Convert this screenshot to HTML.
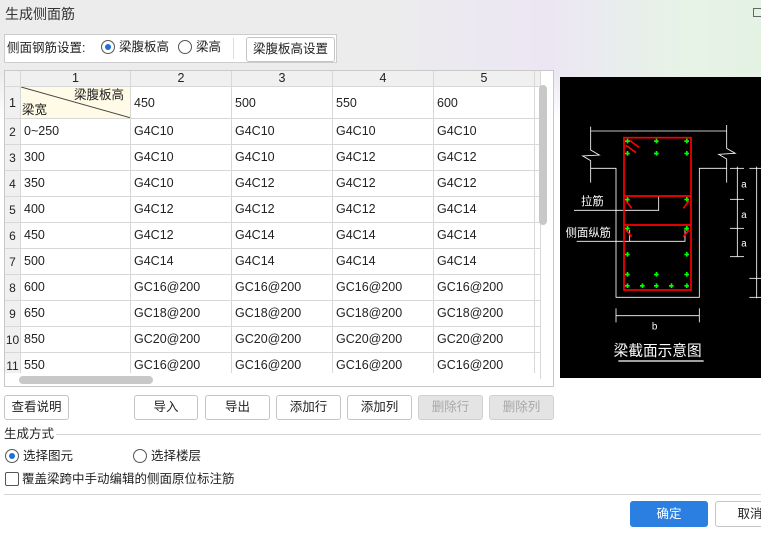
<!DOCTYPE html>
<html><head><meta charset="utf-8">
<style>
*{box-sizing:border-box;margin:0;padding:0}
body{width:761px;height:536px;overflow:hidden;position:relative;font-family:"Liberation Sans","Noto Sans CJK SC",sans-serif;font-size:12px;color:#222;background:#fff}
.top{position:absolute;left:0;top:0;width:761px;height:120px;background:linear-gradient(90deg,#ececec 0%,#ececec 50%,#ece6f4 72%,#e6f3e6 90%,#e4f2e4 100%)}
.topfade{position:absolute;left:0;top:0;width:761px;height:120px;background:linear-gradient(180deg,rgba(236,236,236,0) 0%,rgba(236,236,236,0) 60%,#fff 100%)}
.a{position:absolute;line-height:16px}
.tbl{position:absolute;left:4px;top:70px;width:550px;height:317px;border:1px solid #c8c8c8;background:#fff;overflow:hidden}
.c{position:absolute;border-right:1px solid #d8d8d8;border-bottom:1px solid #d8d8d8;padding-left:3px;line-height:25px;font-size:12.5px;white-space:nowrap;overflow:hidden}
.h{background:#f0f0f0;text-align:center;padding:0;line-height:15px}
.btn{position:absolute;height:25px;border:1px solid #c4c4c4;border-radius:3px;background:#fff;text-align:center;line-height:23px;font-size:12.5px}
.dis{background:#e4e4e4;color:#a8a8a8;border-color:#d0d0d0}
.radio{position:absolute;width:14px;height:14px;border:1px solid #555;border-radius:50%;background:#fff}
.radio.on::after{content:"";position:absolute;left:3px;top:3px;width:6px;height:6px;border-radius:50%;background:#1e6fd9}
</style></head><body>
<div class="top"></div><div class="topfade"></div>
<div class="a" style="left:5px;top:6px;font-size:14px;color:#333">生成侧面筋</div>
<div class="a" style="left:753px;top:8px;width:9px;height:9px;border:1px solid #666"></div>

<div class="a" style="left:4px;top:34px;width:333px;height:29px;border:1px solid #ccc;background:#fff"></div>
<div class="a" style="left:7px;top:40px;font-size:12.5px">侧面钢筋设置:</div>
<div class="radio on" style="left:101px;top:40px"></div>
<div class="a" style="left:119px;top:39px;font-size:12.5px">梁腹板高</div>
<div class="radio" style="left:178px;top:40px"></div>
<div class="a" style="left:196px;top:39px;font-size:12.5px">梁高</div>
<div class="a" style="left:233px;top:38px;width:1px;height:21px;background:#ddd"></div>
<div class="btn" style="left:246px;top:37px;width:89px;height:25px">梁腹板高设置</div>

<div class="tbl">
<div class="c h" style="left:0;top:0;width:16px;height:16px"></div>
<div class="c h" style="left:16px;top:0;width:110px;height:16px">1</div>
<div class="c h" style="left:126px;top:0;width:101px;height:16px">2</div>
<div class="c h" style="left:227px;top:0;width:101px;height:16px">3</div>
<div class="c h" style="left:328px;top:0;width:101px;height:16px">4</div>
<div class="c h" style="left:429px;top:0;width:101px;height:16px">5</div>
<div class="c h" style="left:530px;top:0;width:6px;height:16px"></div>
<div id="rows"></div>
<div class="c" style="left:16px;top:16px;width:110px;height:32px;background:#fffbe6;padding:0">
<svg width="110" height="32" style="position:absolute;left:0;top:0"><line x1="0" y1="0" x2="110" y2="31" stroke="#444" stroke-width="1"/></svg>
<span style="position:absolute;right:6px;top:1px;line-height:14px">梁腹板高</span>
<span style="position:absolute;left:1px;top:16px;line-height:14px">梁宽</span></div>
<div class="a" style="left:534px;top:14px;width:8px;height:140px;background:#c8c8c8;border-radius:4px"></div>
<div class="a" style="left:0;top:302px;width:535px;height:14px;background:#fff"></div>
<div class="a" style="left:14px;top:305px;width:134px;height:8px;background:#c8c8c8;border-radius:4px"></div>
</div>

<svg class="a" style="left:555px;top:70px" width="206" height="310" viewBox="0 0 618 930">
<rect x="15" y="21" width="603" height="903" fill="#000"/>
<g stroke="#fff" stroke-width="2.5" fill="none">
<line x1="107" y1="183" x2="515" y2="183"/>
<polyline points="107,170 107,240 133,255 83,258 107,272 107,338"/>
<polyline points="515,165 515,235 541,250 491,253 515,267 515,338"/>
<polyline points="107,295 183,295 183,682 433,682 433,295 515,295"/>
<polyline points="57,421 311,421 311,378"/>
<polyline points="65,514 390,514 390,478"/>
<line x1="224" y1="480" x2="224" y2="514"/>
<line x1="547" y1="290" x2="547" y2="560"/>
<line x1="525" y1="295" x2="567" y2="295"/><line x1="525" y1="388" x2="567" y2="388"/>
<line x1="525" y1="475" x2="567" y2="475"/><line x1="525" y1="560" x2="567" y2="560"/>
<line x1="605" y1="290" x2="605" y2="685"/>
<line x1="583" y1="295" x2="618" y2="295"/><line x1="583" y1="625" x2="618" y2="625"/><line x1="583" y1="682" x2="618" y2="682"/>
<line x1="183" y1="737" x2="433" y2="737"/><line x1="183" y1="715" x2="183" y2="757"/><line x1="433" y1="715" x2="433" y2="757"/>
<line x1="190" y1="873" x2="446" y2="873" stroke-width="4"/>
</g>
<g fill="#fff" font-family="Liberation Mono,monospace" font-size="30">
<text x="558" y="352">a</text><text x="558" y="444">a</text><text x="558" y="530">a</text>
<text x="290" y="778">b</text></g>
<g fill="#fff" font-family="'Noto Sans CJK SC',sans-serif">
<text x="78" y="405" font-size="34">拉筋</text>
<text x="32" y="499" font-size="34">侧面纵筋</text>
<text x="176" y="856" font-size="44">梁截面示意图</text></g>
<g stroke="#f00" stroke-width="5" fill="none">
<rect x="207" y="203" width="201" height="457"/>
<line x1="207" y1="378" x2="408" y2="378"/><line x1="207" y1="465" x2="408" y2="465"/>
<line x1="222" y1="210" x2="252" y2="232"/><line x1="213" y1="226" x2="243" y2="248"/>
<line x1="213" y1="392" x2="230" y2="415"/><line x1="402" y1="392" x2="385" y2="415"/>
<line x1="213" y1="480" x2="230" y2="500"/><line x1="402" y1="480" x2="385" y2="500"/>
</g>
<g fill="#0f0" id="dots"></g>
</svg>

<div class="btn" style="left:4px;top:395px;width:65px">查看说明</div>
<div class="btn" style="left:134px;top:395px;width:64px">导入</div>
<div class="btn" style="left:205px;top:395px;width:65px">导出</div>
<div class="btn" style="left:276px;top:395px;width:65px">添加行</div>
<div class="btn" style="left:347px;top:395px;width:65px">添加列</div>
<div class="btn dis" style="left:418px;top:395px;width:65px">删除行</div>
<div class="btn dis" style="left:489px;top:395px;width:65px">删除列</div>

<div class="a" style="left:4px;top:426px;font-size:12.5px">生成方式</div>
<div class="a" style="left:56px;top:434px;width:705px;height:1px;background:#d4d4d4"></div>
<div class="radio on" style="left:5px;top:449px"></div>
<div class="a" style="left:23px;top:448px;font-size:12.5px">选择图元</div>
<div class="radio" style="left:133px;top:449px"></div>
<div class="a" style="left:151px;top:448px;font-size:12.5px">选择楼层</div>
<div class="a" style="left:5px;top:472px;width:14px;height:14px;border:1px solid #555;border-radius:2px;background:#fff"></div>
<div class="a" style="left:22px;top:471px;font-size:12.5px">覆盖梁跨中手动编辑的侧面原位标注筋</div>
<div class="a" style="left:4px;top:494px;width:757px;height:1px;background:#d4d4d4"></div>
<div class="btn" style="left:630px;top:501px;width:78px;height:26px;background:#2b7fe0;border-color:#2b7fe0;color:#fff;line-height:24px">确定</div>
<div class="btn" style="left:715px;top:501px;width:70px;height:26px;line-height:24px">取消</div>

<script>
var d=[["0~250","G4C10","G4C10","G4C10","G4C10"],["300","G4C10","G4C10","G4C12","G4C12"],["350","G4C10","G4C12","G4C12","G4C12"],["400","G4C12","G4C12","G4C12","G4C14"],["450","G4C12","G4C14","G4C14","G4C14"],["500","G4C14","G4C14","G4C14","G4C14"],["600","GC16@200","GC16@200","GC16@200","GC16@200"],["650","GC18@200","GC18@200","GC18@200","GC18@200"],["850","GC20@200","GC20@200","GC20@200","GC20@200"],["550","GC16@200","GC16@200","GC16@200","GC16@200"]];
var L=[16,126,227,328,429,530],W=[110,101,101,101,101,6],h='';
h+='<div class="c h" style="left:0;top:16px;width:16px;height:32px;line-height:32px">1</div>';
var r1=["","450","500","550","600",""];
for(var j=1;j<6;j++)h+='<div class="c" style="left:'+L[j]+'px;top:16px;width:'+W[j]+'px;height:32px;line-height:32px">'+r1[j]+'</div>';
for(var i=0;i<d.length;i++){var t=48+i*26;h+='<div class="c h" style="left:0;top:'+t+'px;width:16px;height:26px;line-height:26px;font-size:12px">'+(i+2)+'</div>';
for(var j=0;j<6;j++)h+='<div class="c" style="left:'+L[j]+'px;top:'+t+'px;width:'+W[j]+'px;height:26px">'+(j<5?d[i][j]:'')+'</div>';}
document.getElementById('rows').outerHTML=h;
var p=[[217,213],[304,213],[395,213],[217,250],[304,250],[395,250],[217,388],[395,388],[217,475],[395,475],[217,553],[395,553],[217,613],[304,613],[395,613],[217,647],[262,647],[304,647],[349,647],[395,647]],s='';
p.forEach(function(q){s+='<rect x="'+(q[0]-7)+'" y="'+(q[1]-2)+'" width="14" height="5"/><rect x="'+(q[0]-2)+'" y="'+(q[1]-7)+'" width="5" height="14"/>';});
document.getElementById('dots').innerHTML=s;
</script>
</body></html>
